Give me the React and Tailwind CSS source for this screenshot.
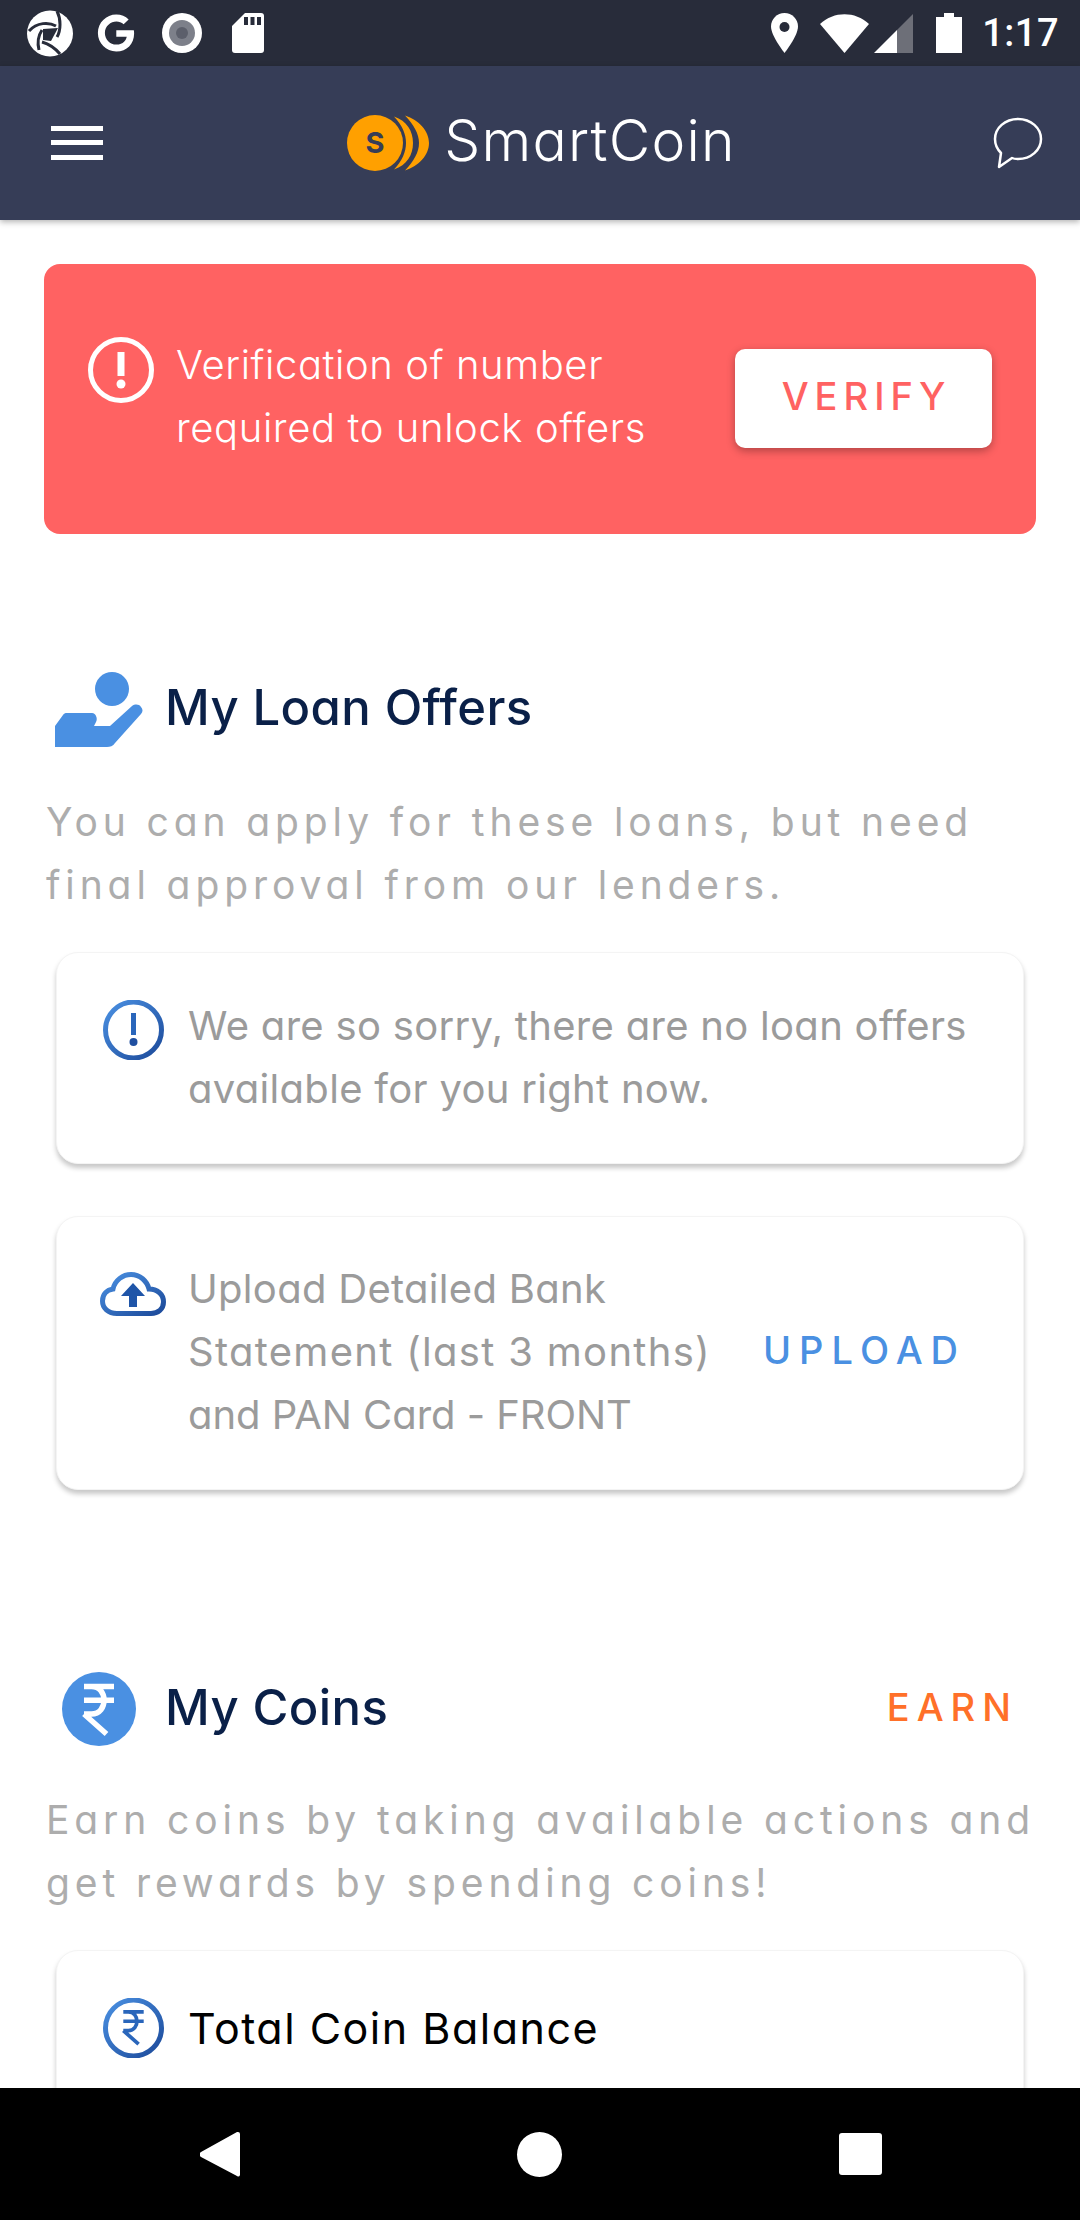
import { FaGoogle } from "react-icons/fa";

const poppins = "font-['Inter','Noto_Sans',sans-serif] [font-feature-settings:'cv11']";

function StatusBar() {
    return (
        <div className="h-[66px] shrink-0 bg-[#282c3a] flex items-center pl-[27px] pr-[21px]">
            <svg width="46" height="47" viewBox="0 0 46 47">
                <circle cx="23" cy="23.5" r="23" fill="#fff" />
                <path d="M2 21C10 12 22 12 29 16" stroke="#282c3a" strokeWidth="3" fill="none" />
                <path d="M30 1C34 9 34 20 30 27" stroke="#282c3a" strokeWidth="3" fill="none" />
                <path d="M12 40C10 32 11 26 15 20" stroke="#282c3a" strokeWidth="3" fill="none" />
                <path d="M33 44C28 38 22 34 15 32" stroke="#282c3a" strokeWidth="3" fill="none" />
                <path d="M16 19L31 18L24 31L16 30Z" fill="#282c3a" />
            </svg>
            <FaGoogle className="ml-[24px] text-white w-[38px] h-[38px]" />
            <svg className="ml-[27px]" width="40" height="40" viewBox="0 0 40 40">
                <circle cx="20" cy="20" r="20" fill="#fff" />
                <circle cx="20" cy="20" r="13" fill="#7d808a" />
                <circle cx="20" cy="20" r="6" fill="#5c5f6b" />
            </svg>
            <svg className="ml-[30px]" width="32" height="40" viewBox="0 0 32 40">
                <path d="M13 0H29a3 3 0 0 1 3 3V37a3 3 0 0 1-3 3H3a3 3 0 0 1-3-3V13Z" fill="#fff" />
                <rect x="12" y="4" width="4" height="8" fill="#282c3a" />
                <rect x="18.5" y="4" width="4" height="8" fill="#282c3a" />
                <rect x="25" y="4" width="4" height="8" fill="#282c3a" />
            </svg>
            <div className="flex-1" />
            <svg width="27" height="40" viewBox="0 0 27 40">
                <path d="M13.5 0C6 0 0 6 0 13.5C0 23 13.5 40 13.5 40S27 23 27 13.5C27 6 21 0 13.5 0Z" fill="#fff" />
                <circle cx="13.5" cy="14" r="5" fill="#282c3a" />
            </svg>
            <svg className="ml-[22px]" width="49" height="39" viewBox="0 0 49 39">
                <path d="M24.5 39L0 10C14 -3 35 -3 49 10Z" fill="#fff" />
            </svg>
            <svg className="ml-[5px]" width="39" height="39" viewBox="0 0 39 39">
                <path d="M39 0V39H23V16Z" fill="#6d6f78" />
                <path d="M23 16V39H0Z" fill="#fff" />
            </svg>
            <svg className="ml-[23px]" width="26" height="40" viewBox="0 0 26 40">
                <path d="M8 0H18V4H26V40H0V4H8Z" fill="#fff" />
            </svg>
            <span className="ml-[20px] font-['Roboto',sans-serif] text-[38px] leading-none font-medium text-white tracking-[0.5px]">1:17</span>
        </div>
    );
}

function Header() {
    return (
        <div className="relative z-10 h-[154px] shrink-0 bg-[#363d57] shadow-[0_2px_6px_rgba(0,0,0,0.3)] flex items-center pl-[51px] pr-[37px]">
            <div className="w-[52px] flex flex-col gap-[9.5px] mt-[-1px]">
                <div className="h-[5px] bg-white" />
                <div className="h-[5px] bg-white" />
                <div className="h-[5px] bg-white" />
            </div>
            <div className="flex-1 flex items-center justify-center ml-[-13px]">
                <svg width="82" height="56" viewBox="0 0 82 56">
                    <circle cx="28" cy="28" r="28" fill="#ffa000" />
                    <path d="M47 1.5C60 6 66 16 66 28S60 50 47 54.5C55 46 59 37 59 28S55 10 47 1.5Z" fill="#ffa000" />
                    <path d="M58 0.5C72 5 82 16 82 28S72 51 58 55.5C67 46 72 37 72 28S67 10 58 0.5Z" fill="#ffa000" />
                    <text x="28" y="38" textAnchor="middle" fontFamily="Inter, sans-serif" fontSize="29" fontWeight="700" fill="#363d57">S</text>
                </svg>
                <span className={`${poppins} ml-[15px] text-[57px] leading-none font-light text-white tracking-[1.2px] mt-[-5px]`}>SmartCoin</span>
            </div>
            <svg width="50" height="52" viewBox="0 0 50 52" fill="none" stroke="#fff" strokeWidth="2.5">
                <path d="M25 2C12 2 2 11 2 22C2 29 5 33 8 36L6 50L19 41C21 42 23 42 25 42C38 42 48 33 48 22C48 11 38 2 25 2Z" strokeLinejoin="round" />
            </svg>
        </div>
    );
}

function GradDefs() {
    return (
        <svg width="0" height="0" className="absolute">
            <defs>
                <linearGradient id="blueGrad" x1="0" y1="0" x2="1" y2="1">
                    <stop offset="0" stopColor="#4a90e2" />
                    <stop offset="1" stopColor="#1c4a9a" />
                </linearGradient>
            </defs>
        </svg>
    );
}

function Rupee({ color, className }) {
    return (
        <svg className={className} viewBox="0 0 24 24" fill="none" stroke={color} strokeWidth="2.2">
            <path d="M6 3h12M6 8.500h12M6 14l9 8M6 14h3c6.700 0 6.700-11 0-11" />
        </svg>
    );
}

function Card({ className, icon, children, right }) {
    return (
        <div className={`mx-[56px] rounded-[22px] bg-white border border-[#f4f4f4] shadow-[0_4px_5px_rgba(0,0,0,0.22)] flex ${className}`}>
            <div className="w-[131px] shrink-0 flex justify-end pr-[22px]">{icon}</div>
            <div className="flex-1">{children}</div>
            {right}
        </div>
    );
}

const cardText = `${poppins} text-[40px] leading-[63px] text-[#9b9b9b] whitespace-nowrap`;
const descText = `${poppins} ml-[46px] text-[39px] leading-[63px] text-[#adadad] tracking-[4.9px] whitespace-nowrap`;
const titleText = `${poppins} text-[49px] leading-none font-medium text-[#0a2048] tracking-[0.4px] mt-[-4px]`;

export default function App() {
    return (
        <div className="w-[1080px] h-[2220px] flex flex-col overflow-hidden bg-white">
            <GradDefs />
            <StatusBar />
            <Header />
            <div className="flex-1 overflow-hidden">
                <div className="mt-[44px] mx-[44px] h-[270px] rounded-[16px] bg-[#ff6262] flex pl-[44px] pr-[44px]">
                    <svg className="mt-[73px] shrink-0" width="66" height="66" viewBox="0 0 66 66">
                        <circle cx="33" cy="33" r="30.5" fill="none" stroke="#fff" strokeWidth="5" />
                        <rect x="29.5" y="15" width="7" height="24" fill="#fff" />
                        <circle cx="33" cy="47" r="4.5" fill="#fff" />
                    </svg>
                    <div className={`${poppins} ml-[22px] mt-[69px] flex-1 text-[40px] leading-[63px] font-light text-white whitespace-nowrap tracking-[0.6px]`}>
                        Verification of number<br />required to unlock offers
                    </div>
                    <div className={`${poppins} mt-[85px] w-[257px] h-[99px] pb-[5px] pl-[6px] rounded-[10px] bg-white shadow-[0_3px_8px_rgba(0,0,0,0.3)] flex items-center justify-center text-[38px] font-medium text-[#ff6262] tracking-[6px]`}>
                        VERIFY
                    </div>
                </div>

                <div className="mt-[138px] ml-[55px] h-[75px] flex items-center">
                    <svg width="88" height="75" viewBox="0 0 88 75">
                        <circle cx="57" cy="17" r="17" fill="#4a90e2" />
                        <path d="M0 54L8 43C9 41.500 10 41 12 41H37C41 41 43 47 41 50L39 54H55L77 34C80 32 84 32 86 35C88 37 88 40 86 42L60 71C58 74 55 75 52 75H0Z" fill="#4a90e2" />
                    </svg>
                    <span className={`${titleText} ml-[22px]`}>My Loan Offers</span>
                </div>
                <div className={`${descText} mt-[43px]`}>
                    You can apply for these loans, but need<br />final approval from our lenders.
                </div>

                <Card className="mt-[36px] h-[212px] pt-[41px]" icon={
                    <svg className="mt-[6px] mr-[2px]" width="61" height="60" viewBox="0 0 61 60">
                        <circle cx="30.5" cy="30" r="28" fill="none" stroke="url(#blueGrad)" strokeWidth="5" />
                        <rect x="28" y="13" width="5" height="22" fill="#2a66bb" />
                        <circle cx="30.5" cy="42" r="4" fill="#1f4fa0" />
                    </svg>
                }>
                    <div className={`${cardText} tracking-[0.3px]`}>
                        We are so sorry, there are no loan offers<br />available for you right now.
                    </div>
                </Card>

                <Card className="mt-[52px] h-[274px] pt-[40px]" icon={
                    <svg className="mt-[15px]" width="66" height="44" viewBox="0 0 66 44" fill="none">
                        <path d="M17 41.500C8 41.500 2.500 36 2.500 29C2.500 22 7 18 13 17C15 8 23 2.500 31 2.500C40 2.500 47 9 49 17C57 17 63.500 22 63.500 30C63.500 37 58 41.500 51 41.500Z" stroke="url(#blueGrad)" strokeWidth="5" />
                        <path d="M33 11L45 24H37V35H29V24H21Z" fill="#1f55a8" />
                    </svg>
                }
                    right={
                        <div className={`${poppins} self-center mt-[-46px] pr-[57px] text-[38px] font-medium text-[#4a90e2] tracking-[8px]`}>UPLOAD</div>
                    }>
                    <div className={cardText}>
                        <div className="tracking-[0.3px]">Upload Detailed Bank</div>
                        <div className="tracking-[1.3px]">Statement (last 3 months)</div>
                        <div className="tracking-[-0.05px]">and PAN Card - FRONT</div>
                    </div>
                </Card>

                <div className="mt-[182px] ml-[62px] mr-[62px] h-[74px] flex items-center">
                    <div className="w-[74px] h-[74px] rounded-full bg-[#4a90e2] flex items-center justify-center">
                        <Rupee color="#fff" className="w-[60px] h-[60px]" />
                    </div>
                    <span className={`${titleText} ml-[29px] flex-1`}>My Coins</span>
                    <span className={`${poppins} text-[38px] font-medium text-[#ff7029] tracking-[7px] mt-[-3px]`}>EARN</span>
                </div>
                <div className={`${descText} mt-[42px]`}>
                    Earn coins by taking available actions and<br />get rewards by spending coins!
                </div>

                <Card className="mt-[36px] h-[300px] pt-[46px]" icon={
                    <svg className="mt-[1px] mr-[2px]" width="61" height="60" viewBox="0 0 61 60" fill="none">
                        <circle cx="30.5" cy="30" r="28" stroke="url(#blueGrad)" strokeWidth="5" />
                        <g transform="translate(10.1 8.8) scale(1.7)">
                            <path d="M6 3h12M6 8.500h12M6 14l9 8M6 14h3c6.700 0 6.700-11 0-11" stroke="#2a66bb" strokeWidth="2.200" />
                        </g>
                    </svg>
                }>
                    <div className={`${poppins} text-[43px] leading-[63px] text-black whitespace-nowrap tracking-[1.5px]`}>Total Coin Balance</div>
                </Card>
            </div>
            <div className="h-[132px] shrink-0 bg-black relative z-10 flex items-center justify-between pl-[200px] pr-[198px]">
                <svg width="40" height="45" viewBox="0 0 40 45">
                    <path d="M38 0A2 2 0 0 1 40 2V43A2 2 0 0 1 37 44L1 25A3 3 0 0 1 1 20L37 0Z" fill="#fff" />
                </svg>
                <div className="w-[45px] h-[45px] rounded-full bg-white" />
                <div className="w-[43px] h-[42px] rounded-[3px] bg-white" />
            </div>
        </div>
    );
}
